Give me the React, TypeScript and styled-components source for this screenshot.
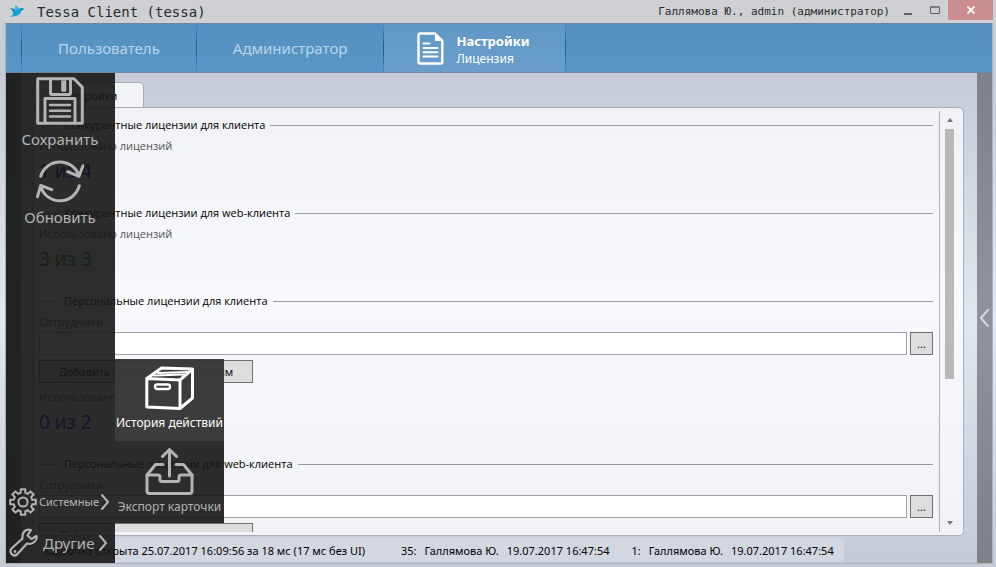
import React from "react";
import styled, { createGlobalStyle } from "styled-components";

const GlobalStyle = createGlobalStyle`
  * { box-sizing: border-box; }
  html, body, #root { height: 100%; }
  body {
    margin: 0;
    font-family: "Noto Sans", "Open Sans", sans-serif;
    font-size: 12px;
    color: #111;
  }
  button, input { font: inherit; color: inherit; margin: 0; padding: 0; border: 0; }
  button { background: none; cursor: pointer; white-space: nowrap; }
  h1, h2, p { margin: 0; font-weight: 400; }
`;

const Window = styled.div`
  display: flex;
  flex-direction: column;
  height: 100vh;
  min-height: 480px;
  overflow: hidden;
  background: linear-gradient(#c8cbd2, #c6ccd7 13%, #dfe7f1 56%, #c5cbd6);
`;

const TitleBar = styled.header`
  display: flex;
  align-items: center;
  flex: none;
  height: 23px;
  padding-left: 9px;
  background: #cfd0d4;
  font-family: "DejaVu Sans Mono", monospace;
  color: #2a2a2a;
`;
const Title = styled.h1`
  flex: 1;
  margin-left: 12px;
  font-size: 14px;
`;
const UserName = styled.span`
  font-size: 11px;
  margin-right: 4px;
`;
const WindowButton = styled.button<{ $close?: boolean }>`
  display: flex;
  align-items: center;
  justify-content: center;
  align-self: flex-start;
  width: ${(p) => (p.$close ? 45 : 27)}px;
  height: 20px;
  background: ${(p) => (p.$close ? "#ca8e91" : "transparent")};
`;
const TitleEnd = styled.div`
  width: 3px;
`;

const Frame = styled.div`
  display: flex;
  flex-direction: column;
  flex: 1;
  min-height: 0;
  margin: 0 3px 3px 5px;
  border: 1px solid #b0b2b8;
  border-top: 0;
`;

const Ribbon = styled.nav`
  display: flex;
  flex: none;
  height: 50px;
  padding-left: 15px;
  background: linear-gradient(#5590c0, #5a96c5);
  border-top: 1px solid #6d83a8;
  border-bottom: 1px solid #6d83a8;
`;
const RibbonTab = styled.button<{ $active?: boolean; $last?: boolean }>`
  display: flex;
  align-items: center;
  gap: 12px;
  && { padding: 0 36px 0 ${(p) => (p.$active ? 33 : 36)}px; }
  font-size: 15px;
  color: ${(p) => (p.$active ? "#fff" : "#b9d5ee")};
  background: ${(p) => (p.$active ? "linear-gradient(#6097c5, #6a9fcb)" : "transparent")};
  border-left: 1px solid;
  border-right: ${(p) => (p.$last ? "1px solid" : "0")};
  border-image: linear-gradient(#5590c0, #0d5b9c 50%, #5590c0) 1;
`;
const ActiveText = styled.span`
  display: flex;
  flex-direction: column;
  align-items: flex-start;
  padding-top: 3px;
  font-size: 12px;
  line-height: 18px;
`;
const ActiveTitle = styled.strong`
  font-size: 13px;
`;

const Workspace = styled.div`
  position: relative;
  display: flex;
  flex: 1;
  min-height: 0;
`;
const EdgeStrip = styled.button`
  display: flex;
  align-items: center;
  justify-content: center;
  flex: none;
  width: 15px;
  background: rgba(0, 0, 0, 0.36);
  && { color: #d4d6da; }
`;
const Center = styled.main`
  display: flex;
  flex-direction: column;
  flex: 1;
  min-width: 0;
  padding: 9px 13px 0 12px;
`;
const CardTabs = styled.div`
  display: flex;
  flex: none;
  height: 25px;
`;
const CardTab = styled.button`
  width: 111px;
  font-size: 11px;
  background: #f2f3f6;
  && {
    border: 1px solid #aaaeb8;
    border-bottom: 0;
  }
  border-radius: 5px 5px 0 0;
`;
const Card = styled.section`
  display: flex;
  flex: 1;
  min-height: 0;
  padding: 3px 4px;
  background: linear-gradient(#f1f2f5, #f8f9fd 45%, #f1f2f5);
  border: 1px solid #aaaeb8;
  border-radius: 0 5px 5px 5px;
`;
const CardBody = styled.div`
  flex: 1;
  min-width: 0;
  overflow: hidden;
  padding: 5px 6px 0 1px;
`;
const Scroll = styled.div`
  display: flex;
  flex-direction: column;
  align-items: center;
  flex: none;
  width: 20px;
  border-left: 1px solid #b0b2b8;
`;
const ScrollButton = styled.button`
  display: flex;
  align-items: center;
  justify-content: center;
  flex: none;
  width: 17px;
  height: 18px;
`;
const ScrollTrack = styled.div`
  flex: 1;
  width: 9px;
`;
const ScrollThumb = styled.div`
  height: 65%;
  background: #b9b9b9;
`;

const Group = styled.section<{ $tall?: boolean }>`
  height: ${(p) => (p.$tall ? 163 : 88)}px;
`;
const GroupTitle = styled.h2`
  display: flex;
  align-items: center;
  gap: 5px;
  height: 18px;
  margin-bottom: 3px;
  font-family: "Open Sans", "Noto Sans", sans-serif;
  font-size: 11px;
  line-height: 18px;
  white-space: nowrap;
  color: #000;
  &::before, &::after { content: ""; height: 1px; background: #9a9ba0; }
  &::before { width: 20px; }
  &::after { flex: 1; }
`;
const Caption = styled.label`
  display: block;
  margin-bottom: 3px;
  font-family: "Open Sans", "Noto Sans", sans-serif;
  font-size: 11px;
  line-height: 17px;
  color: #555;
`;
const Counter = styled.p<{ $full?: boolean }>`
  font-size: 19px;
  line-height: 28px;
  color: ${(p) => (p.$full ? "#008000" : "#0000e0")};
`;
const FieldRow = styled.div`
  display: flex;
  gap: 3px;
  margin: -1px 0 5px;
`;
const Field = styled.input`
  flex: 1;
  min-width: 0;
  height: 23px;
  && { padding: 0 4px; border: 1px solid #a0a2a6; }
  background: #fff;
`;
const PushButton = styled.button<{ $wide?: boolean }>`
  display: block;
  height: 23px;
  width: ${(p) => (p.$wide ? 214 : 23)}px;
  font-size: 11px;
  background: #ddd;
  && {
    margin-bottom: ${(p) => (p.$wide ? 5 : 0)}px;
    border: 1px solid #707070;
  }
`;

const StatusBar = styled.footer`
  display: flex;
  align-items: center;
  align-self: flex-start;
  flex: none;
  gap: 22px;
  height: 24px;
  margin: 2px 0 1px;
  padding: 0 10px;
  border-radius: 5px;
  background: #d3d7e0;
  font-size: 11px;
  white-space: nowrap;
  color: #000;
`;
const StatusMessage = styled.span`
  margin-right: 14px;
`;
const StatusItem = styled.span`
  display: flex;
  gap: 8px;
`;

const SideMenu = styled.aside`
  position: absolute;
  inset: 0 auto 0 0;
  display: flex;
  flex-direction: column;
  width: 109px;
  background: rgba(22, 22, 22, 0.9);
  color: #b4b4b4;
`;
const SideAction = styled.button`
  display: flex;
  flex-direction: column;
  align-items: center;
  height: 82px;
  && { padding: 4px 1px 0 0; }
  font-size: 15px;
  line-height: 28px;
`;
const SideSpacer = styled.div`
  flex: 1;
`;
const SideGroup = styled.button<{ $large?: boolean }>`
  display: flex;
  align-items: center;
  gap: ${(p) => (p.$large ? 5 : 2)}px;
  height: 41px;
  && { padding-left: 3px; }
  font-size: ${(p) => (p.$large ? 15 : 11)}px;
`;
const Flyout = styled.div`
  position: absolute;
  left: 109px;
  bottom: 40px;
  display: flex;
  flex-direction: column;
  width: 109px;
  color: #b4b4b4;
`;
const FlyoutItem = styled.button<{ $active?: boolean }>`
  display: flex;
  flex-direction: column;
  align-items: center;
  height: 82px;
  && { padding-top: 7px; }
  font-size: 12px;
  line-height: 24px;
  color: ${(p) => (p.$active ? "#fff" : "inherit")};
  background: ${(p) => (p.$active ? "rgba(56, 56, 56, 0.98)" : "rgba(22, 22, 22, 0.9)")};
`;

const line = {
  fill: "none",
  stroke: "currentColor",
  strokeWidth: 3,
  strokeLinecap: "round" as const,
  strokeLinejoin: "round" as const,
};

const Bird = () => (
  <svg width="16" height="14" viewBox="0 0 16 14">
    <path d="M1 3l5 1 3 3-3 2z" fill="#1487b8" />
    <path d="M6 0l4 3 1 3-5 1z" fill="#35b9dd" />
    <path d="M4 7l6-3 2-1 3 1-3 2-1 3-4 2-6 1 3-2z" fill="#0aa5d6" />
    <path d="M12 3l3 1-3 1z" fill="#0d6d98" />
  </svg>
);

const DocumentIcon = () => (
  <svg width="27" height="33" viewBox="0 0 27 33" {...line} strokeWidth={2.4}>
    <path d="M3.2 1.5H18l7.3 7.3V30q0 1.5-1.5 1.5H3.2q-1.7 0-1.7-1.5V3q0-1.5 1.7-1.5z" />
    <path d="M18.5 2v6.5H25z" fill="currentColor" strokeWidth={1} />
    <path d="M6.5 11.5h6M6.5 16h14M6.5 20.3h14M6.5 24.5h14" strokeWidth={2} />
  </svg>
);

const SaveIcon = () => (
  <svg width="48" height="48" viewBox="0 0 48 48" {...line}>
    <path d="M1.7 1.7H38l8.3 8.5v36.1H1.7z" />
    <path d="M14.5 2v14q0 1.5 1.5 1.5h17q1.5 0 1.5-1.5V2M9 46V21.5h30V46" />
    <path d="M26.5 4.5H29v9h-2.5zM14 28h20M14 33.8h20M14 39.5h20" strokeWidth={2.6} />
  </svg>
);

const RefreshIcon = () => (
  <svg width="48" height="44" viewBox="0 0 48 44" {...line}>
    <path d="M4.7 17.3A20 20 0 0 1 43 17M31.7 12.7L43 17.3l4-10.6" />
    <path d="M43.3 26.7A20 20 0 0 1 4.7 27.3M15.7 30.7L4.7 26.5 1.5 37.7" />
  </svg>
);

const BoxIcon = () => (
  <svg width="50" height="45" viewBox="0 0 50 45" {...line}>
    <path d="M1.8 12.5L35 14v28.5L1.8 41zM1.8 12.5L16.5 2 47.5 3 35 14M47.5 3v29L35 42.5" />
    <path d="M9 9.5l30-1M13 7l29-1" strokeWidth={2} />
    <rect x="10" y="18.5" width="15" height="4.5" rx="2.2" strokeWidth={2.4} />
  </svg>
);

const ExportIcon = () => (
  <svg width="50" height="47" viewBox="0 0 50 47" {...line}>
    <path d="M18 16.5h-7.500L2 27v16q0 2.500 2.500 2.500h40q2.500 0 2.500-2.500V27l-8.500-10.500H31" />
    <path d="M2 27h11q2 0 2 2v2.500q0 2 2 2h15q2 0 2-2V29q0-2 2-2h11" />
    <path d="M24.500 28V2M17.500 8.500l7-7 7 7" />
  </svg>
);

const gearPath = Array.from({ length: 8 }, (_, i) => {
  const point = (radius: number, degrees: number) => {
    const a = ((i * 45 + degrees) * Math.PI) / 180;
    return `${(14 + radius * Math.cos(a)).toFixed(2)} ${(14 + radius * Math.sin(a)).toFixed(2)}`;
  };
  return `${i ? "L" : "M"}${point(9.5, -14)}L${point(13, -10)}L${point(13, 10)}L${point(9.5, 14)}A9.5 9.5 0 0 1 ${point(9.5, 31)}`;
}).join("");

const GearIcon = () => (
  <svg width="28" height="28" viewBox="0 0 28 28" {...line} strokeWidth={2}>
    <path d={`${gearPath}z`} />
    <circle cx="14" cy="14" r="4.6" />
  </svg>
);

const WrenchIcon = () => (
  <svg width="29" height="29" viewBox="0 0 29 29" {...line} strokeWidth={2.2}>
    <path d="M22 2C17.5.3 12.5 4 13.5 10.5L2.5 20.5C-.5 24 4 29.500 8 26.500L18 15.500C24 17 28.500 12.500 27.500 8L22.500 11 18.500 7.500z" />
    <circle cx="6" cy="23.5" r=".7" strokeWidth={1.4} />
  </svg>
);

const Chevron = ({ left = false }: { left?: boolean }) => (
  <svg width="9" height="18" viewBox="0 0 9 18" {...line} strokeWidth={2}>
    <path d={left ? "M8 1L1 9l7 8" : "M1 2L7 9l-6 7"} />
  </svg>
);

const Arrow = ({ down = false }: { down?: boolean }) => (
  <svg width="6" height="4" viewBox="0 0 6 4" fill="#777">
    <path d={down ? "M0 0h6L3 4z" : "M0 4h6L3 0z"} />
  </svg>
);

type LicenseGroupProps = { id: string; title: string; value: string; full?: boolean; personal?: boolean };

const LicenseGroup = ({ id, title, value, full, personal }: LicenseGroupProps) => (
  <Group $tall={personal}>
    <GroupTitle>{title}</GroupTitle>
    {personal && (
      <>
        <Caption htmlFor={id}>Сотрудники</Caption>
        <FieldRow>
          <Field id={id} />
          <PushButton aria-label="Выбрать сотрудников">...</PushButton>
        </FieldRow>
        <PushButton $wide>Добавить сотрудников по ролям</PushButton>
      </>
    )}
    <Caption as="p">Использовано лицензий</Caption>
    <Counter $full={full}>{value}</Counter>
  </Group>
);

export default function App() {
  return (
    <Window>
      <GlobalStyle />
      <TitleBar>
        <Bird />
        <Title>Tessa Client (tessa)</Title>
        <UserName>Галлямова Ю., admin (администратор)</UserName>
        <WindowButton aria-label="Свернуть">
          <svg width="8" height="9"><path d="M0 7h8v2H0z" fill="#606164" /></svg>
        </WindowButton>
        <WindowButton aria-label="Развернуть">
          <svg width="10" height="8" fill="none" stroke="#606164"><path d="M.5 1h9v6.5h-9zM0 1h10" /></svg>
        </WindowButton>
        <WindowButton $close aria-label="Закрыть">
          <svg width="8" height="8" stroke="#fff" strokeWidth="1.8"><path d="M.5.5l7 7M7.5.5l-7 7" /></svg>
        </WindowButton>
        <TitleEnd />
      </TitleBar>
      <Frame>
        <Ribbon>
          <RibbonTab>Пользователь</RibbonTab>
          <RibbonTab>Администратор</RibbonTab>
          <RibbonTab $active $last>
            <DocumentIcon />
            <ActiveText>
              <ActiveTitle>Настройки</ActiveTitle>
              Лицензия
            </ActiveText>
          </RibbonTab>
        </Ribbon>
        <Workspace>
          <EdgeStrip aria-label="Левая панель" />
          <Center>
            <CardTabs>
              <CardTab>Настройки</CardTab>
            </CardTabs>
            <Card>
              <CardBody>
                <LicenseGroup id="client" title="Конкурентные лицензии для клиента" value="1 из 4" />
                <LicenseGroup id="web" title="Конкурентные лицензии для web-клиента" value="3 из 3" full />
                <LicenseGroup id="personal-client" title="Персональные лицензии для клиента" value="0 из 2" personal />
                <LicenseGroup id="personal-web" title="Персональные лицензии для web-клиента" value="0 из 2" personal />
              </CardBody>
              <Scroll>
                <ScrollButton aria-label="Вверх"><Arrow /></ScrollButton>
                <ScrollTrack><ScrollThumb /></ScrollTrack>
                <ScrollButton aria-label="Вниз"><Arrow down /></ScrollButton>
              </Scroll>
            </Card>
            <StatusBar>
              <StatusMessage>Карточка открыта 25.07.2017 16:09:56 за 18 мс (17 мс без UI)</StatusMessage>
              <StatusItem><span>35:</span><span>Галлямова Ю.</span><span>19.07.2017 16:47:54</span></StatusItem>
              <StatusItem><span>1:</span><span>Галлямова Ю.</span><span>19.07.2017 16:47:54</span></StatusItem>
            </StatusBar>
          </Center>
          <EdgeStrip aria-label="Правая панель"><Chevron left /></EdgeStrip>
          <SideMenu>
            <SideAction><SaveIcon />Сохранить</SideAction>
            <SideAction><RefreshIcon />Обновить</SideAction>
            <SideSpacer />
            <SideGroup><GearIcon />Системные<Chevron /></SideGroup>
            <SideGroup $large><WrenchIcon />Другие<Chevron /></SideGroup>
          </SideMenu>
          <Flyout>
            <FlyoutItem $active><BoxIcon />История действий</FlyoutItem>
            <FlyoutItem><ExportIcon />Экспорт карточки</FlyoutItem>
          </Flyout>
        </Workspace>
      </Frame>
    </Window>
  );
}
